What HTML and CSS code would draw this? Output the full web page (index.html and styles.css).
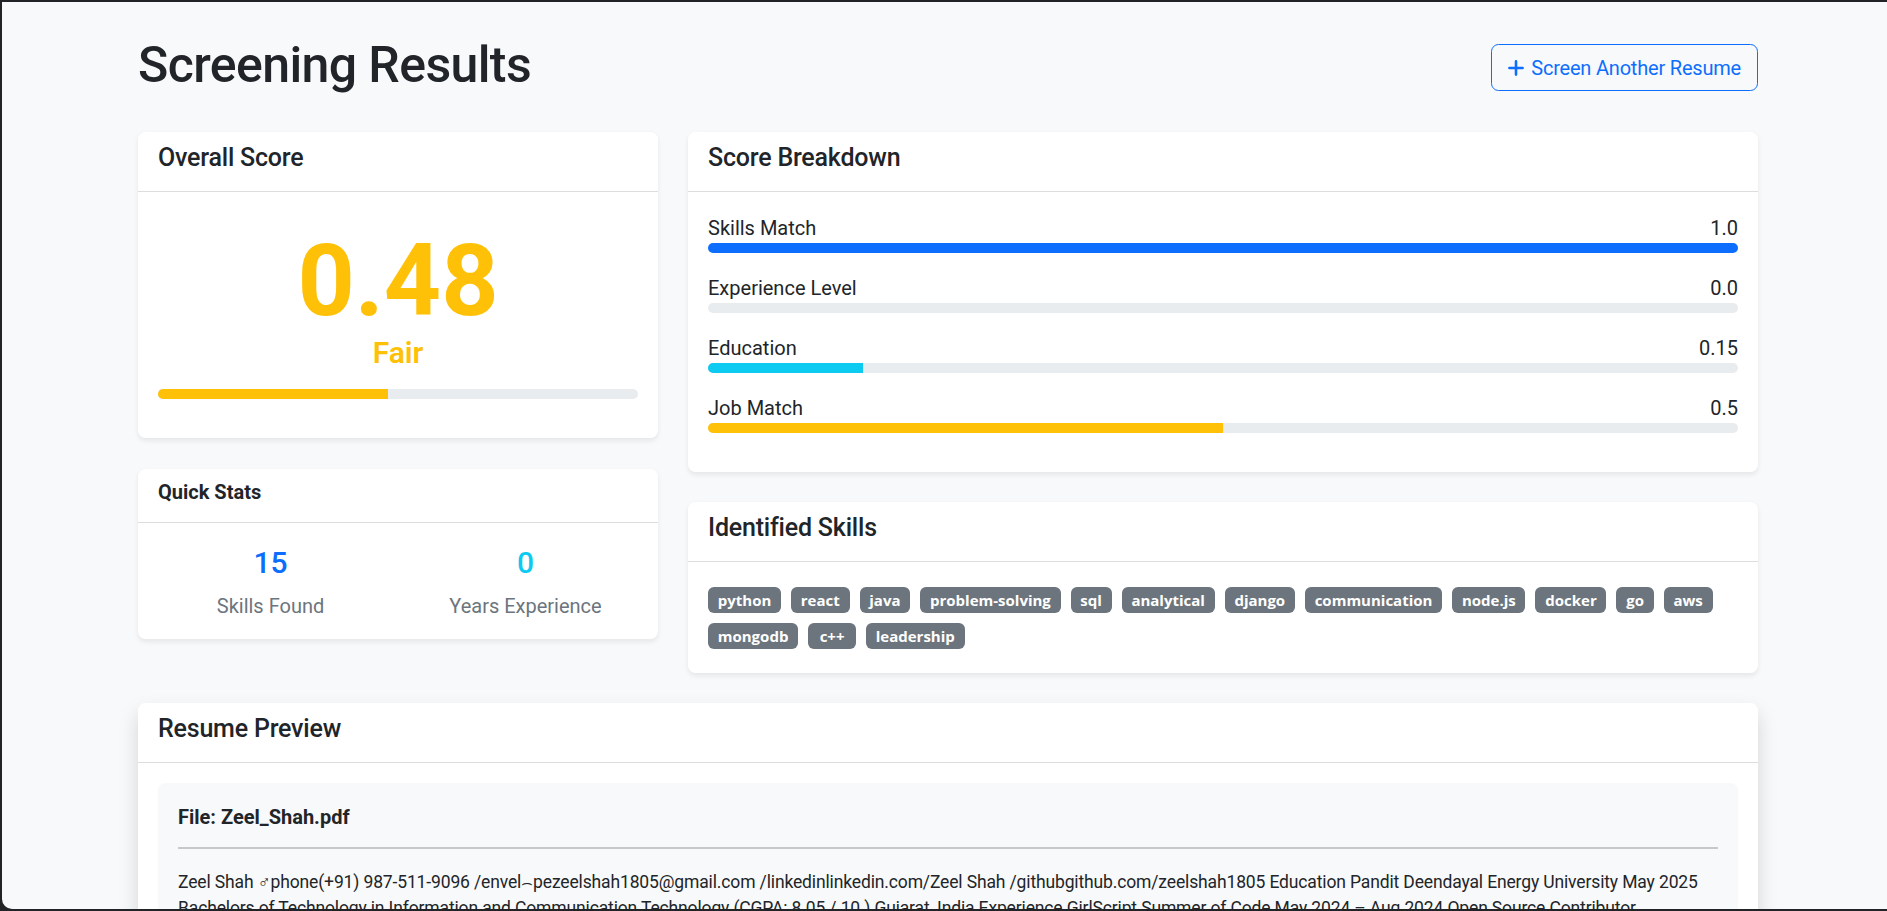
FILE: index.html
```html
<!DOCTYPE html>
<html lang="en">
<head>
<meta charset="utf-8">
<title>Screening Results</title>
<link rel="stylesheet" href="styles.css">
</head>
<body>
<div class="app">
  <div class="container">
    <header class="page-head">
      <h1 class="page-title">Screening Results</h1>
      <a class="btn-outline" href="#">
        <svg class="plus" viewBox="0 0 16 16" width="16" height="16" aria-hidden="true"><path d="M8 1.4v13.2M1.4 8h13.2" stroke="currentColor" stroke-width="2.6" stroke-linecap="round" fill="none"/></svg>
        <span>Screen Another Resume</span>
      </a>
    </header>

    <div class="grid">
      <div class="col col-left">
        <section class="card">
          <div class="card-header"><h5>Overall Score</h5></div>
          <div class="card-body overall-body">
            <div class="score-big">0.48</div>
            <div class="score-label">Fair</div>
            <div class="progress overall-progress"><div class="bar bar-warning" style="width:48%"></div></div>
          </div>
        </section>

        <section class="card">
          <div class="card-header header-sm"><h6>Quick Stats</h6></div>
          <div class="card-body stats-body">
            <div class="stat">
              <div class="stat-num num-primary">15</div>
              <div class="stat-label">Skills Found</div>
            </div>
            <div class="stat">
              <div class="stat-num num-info">0</div>
              <div class="stat-label">Years Experience</div>
            </div>
          </div>
        </section>
      </div>

      <div class="col col-right">
        <section class="card">
          <div class="card-header"><h5>Score Breakdown</h5></div>
          <div class="card-body breakdown-body">
            <div class="metric">
              <div class="metric-head"><span>Skills Match</span><span>1.0</span></div>
              <div class="progress"><div class="bar bar-primary" style="width:100%"></div></div>
            </div>
            <div class="metric">
              <div class="metric-head"><span>Experience Level</span><span>0.0</span></div>
              <div class="progress"><div class="bar bar-primary" style="width:0%"></div></div>
            </div>
            <div class="metric">
              <div class="metric-head"><span>Education</span><span>0.15</span></div>
              <div class="progress"><div class="bar bar-info" style="width:15%"></div></div>
            </div>
            <div class="metric">
              <div class="metric-head"><span>Job Match</span><span>0.5</span></div>
              <div class="progress"><div class="bar bar-warning" style="width:50%"></div></div>
            </div>
          </div>
        </section>

        <section class="card">
          <div class="card-header"><h5>Identified Skills</h5></div>
          <div class="card-body skills-body">
            <span class="badge">python</span>
            <span class="badge">react</span>
            <span class="badge">java</span>
            <span class="badge">problem-solving</span>
            <span class="badge">sql</span>
            <span class="badge">analytical</span>
            <span class="badge">django</span>
            <span class="badge">communication</span>
            <span class="badge">node.js</span>
            <span class="badge">docker</span>
            <span class="badge">go</span>
            <span class="badge">aws</span>
            <span class="badge">mongodb</span>
            <span class="badge badge-wide">c++</span>
            <span class="badge">leadership</span>
          </div>
        </section>
      </div>
    </div>

    <section class="card card-resume">
      <div class="card-header"><h5>Resume Preview</h5></div>
      <div class="card-body resume-body">
        <div class="resume-box">
          <h6 class="file-name">File: Zeel_Shah.pdf</h6>
          <hr class="divider">
          <div class="resume-text">
            <div class="resume-line">Zeel Shah ♂phone(+91) 987-511-9096 /envel⌢pezeelshah1805@gmail.com /linkedinlinkedin.com/Zeel Shah /githubgithub.com/zeelshah1805 Education Pandit Deendayal Energy University May 2025</div>
            <div class="resume-line">Bachelors of Technology in Information and Communication Technology (CGPA: 8.05 / 10 ) Gujarat, India Experience GirlScript Summer of Code May 2024 – Aug 2024 Open Source Contributor</div>
          </div>
        </div>
      </div>
    </section>
  </div>
</div>
</body>
</html>
```

FILE: styles.css
```css
* {
  box-sizing: border-box;
}

html {
  background: #222326;
}

body {
  margin: 0;
  padding: 2px 0 2px 2px;
  height: 911px;
  overflow: hidden;
  font-family: Roboto, "Liberation Sans", "DejaVu Sans", sans-serif;
  font-size: 20px;
  line-height: 1.5;
  color: #212529;
}

.app {
  height: 907px;
  background: #f8f9fa;
  border-bottom-left-radius: 10px;
  overflow: hidden;
}

.container {
  width: 1620px;
  margin-left: 136px;
  padding-top: 33px;
}

/* Page header */
.page-head {
  display: flex;
  justify-content: space-between;
  align-items: flex-start;
  height: 60px;
  margin-bottom: 37px;
}

.page-title {
  margin: 0;
  font-size: 50px;
  line-height: 60px;
  font-weight: 500;
  letter-spacing: -0.6px;
}

.btn-outline {
  margin-top: 9px;
  height: 47px;
  display: flex;
  align-items: center;
  gap: 7px;
  padding: 1px 16px 0;
  border: 1px solid #0d6efd;
  border-radius: 7.5px;
  color: #0d6efd;
  text-decoration: none;
  font-size: 20px;
  line-height: 30px;
  letter-spacing: -0.2px;
}

.plus {
  display: block;
  flex: none;
}

/* Grid */
.grid {
  display: grid;
  grid-template-columns: 520px 1070px;
  column-gap: 30px;
  align-items: start;
}

.col {
  display: flex;
  flex-direction: column;
}

.col-left {
  gap: 31px;
}

.col-right {
  gap: 30px;
}

/* Cards */
.card {
  background: #fff;
  border-radius: 7.5px;
  box-shadow: 0 2.5px 5px rgba(0, 0, 0, 0.075);
  overflow: hidden;
}

.card-header {
  padding: 11px 20px 18px;
  border-bottom: 1px solid #dcdddf;
}

.card-header h5 {
  margin: 0;
  font-size: 25px;
  line-height: 30px;
  font-weight: 500;
  letter-spacing: -0.2px;
}

.header-sm h6 {
  margin: 0;
  font-size: 20px;
  line-height: 24px;
  font-weight: 700;
}

/* Progress */
.progress {
  height: 10px;
  background: #e9ecef;
  border-radius: 5px;
  overflow: hidden;
}

.bar {
  height: 100%;
}

.bar-primary {
  background: #0d6efd;
}

.bar-info {
  background: #0dcaf0;
}

.bar-warning {
  background: #ffc107;
}

/* Overall score */
.overall-body {
  padding: 20px;
  text-align: center;
}

.score-big {
  margin-top: 15px;
  font-size: 100px;
  line-height: 108px;
  font-weight: 700;
  color: #ffc107;
}

.score-label {
  font-size: 30px;
  line-height: 36px;
  font-weight: 600;
  color: #ffc107;
}

.overall-progress {
  margin: 18px 0 19px;
}

/* Quick stats */
.stats-body {
  padding: 22px 5px 18px;
  display: grid;
  grid-template-columns: 1fr 1fr;
  text-align: center;
}

.stat-num {
  font-size: 30px;
  line-height: 36px;
  font-weight: 500;
  margin-bottom: 10px;
}

.num-primary {
  color: #0d6efd;
}

.num-info {
  color: #0dcaf0;
}

.stat-label {
  font-size: 20px;
  line-height: 30px;
  color: #6c757d;
}

/* Breakdown */
.breakdown-body {
  padding: 21px 20px 19px;
}

.metric {
  margin-bottom: 20px;
}

.metric-head {
  display: flex;
  justify-content: space-between;
  line-height: 30px;
}

/* Skills */
.skills-body {
  padding: 25px 20px 24px;
  display: flex;
  flex-wrap: wrap;
  gap: 10px;
}

.badge {
  display: inline-block;
  height: 26px;
  padding: 0 9.75px;
  font-family: "Open Sans", Roboto, sans-serif;
  font-size: 15px;
  line-height: 26px;
  font-weight: 700;
  color: #fff;
  background: #6c757d;
  border-radius: 6px;
  white-space: nowrap;
}

.badge-wide {
  padding: 0 11.5px;
}

/* Resume preview */
.card-resume {
  margin-top: 30px;
  box-shadow: 0 10px 20px rgba(0, 0, 0, 0.15);
}

.resume-body {
  padding: 20px;
}

.resume-box {
  background: #f8f9fa;
  border-radius: 7.5px;
  padding: 22px 20px 20px;
}

.file-name {
  margin: 0;
  font-size: 20px;
  line-height: 24px;
  font-weight: 700;
}

.divider {
  margin: 18px 0 20px;
  height: 2px;
  border: 0;
  background: #c7c8ca;
}

.resume-text {
  font-size: 17.5px;
  line-height: 26.25px;
  letter-spacing: -0.14px;
}

.resume-line {
  white-space: nowrap;
}
```
